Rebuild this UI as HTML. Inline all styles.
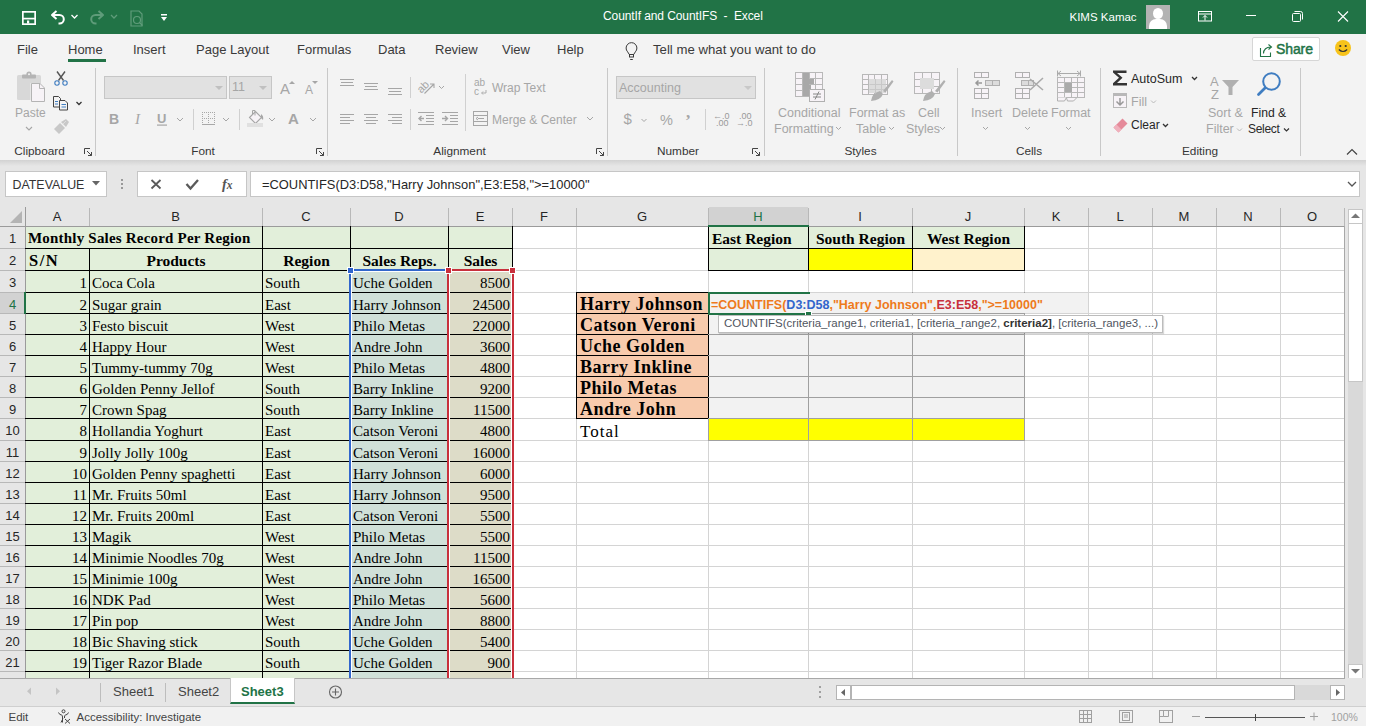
<!DOCTYPE html><html><head><meta charset="utf-8"><style>
*{margin:0;padding:0;box-sizing:border-box}
html,body{width:1380px;height:726px;overflow:hidden;background:#fff;position:relative;font-family:"Liberation Sans",sans-serif}
.abs{position:absolute}
.t{position:absolute;white-space:pre;line-height:1}
.sv{position:absolute;overflow:visible}
.cell{position:absolute;font-family:"Liberation Serif",serif;font-size:15px;color:#000;white-space:pre;line-height:21px;overflow:hidden}
.b{font-weight:bold}
</style></head><body>
<div class="abs" style="left:0;top:0;width:1366px;height:34px;background:#217346"></div>
<div class="abs" style="left:1366px;top:0;width:14px;height:726px;background:#fff"></div>
<div class="t" style="left:603px;top:10px;font-size:12px;color:#fff;letter-spacing:-0.1px">CountIf and CountIFS  -  Excel</div>
<div class="t" style="left:1069.5px;top:12px;font-size:11.5px;color:#fff">KIMS Kamac</div>
<div class="abs" style="left:1146px;top:5px;width:24px;height:24px;background:#b3b3b3;overflow:hidden"><div class="abs" style="left:7px;top:3px;width:10px;height:11px;border-radius:50%;background:#fff"></div><div class="abs" style="left:3px;top:14px;width:18px;height:12px;border-radius:7px 7px 0 0;background:#fff"></div></div>
<svg class="sv" style="left:0;top:0" width="1366" height="34"><g fill="none" stroke="#fff" stroke-width="1.7"><rect x="22.85" y="11.85" width="12.3" height="12.3"/><path d="M23 18.6h12"/></g><rect x="27" y="20.5" width="2.2" height="3" fill="#fff"/><g fill="none" stroke="#fff" stroke-width="2" stroke-linejoin="round"><path d="M56.5 11l-4.5 4l4.5 4"/><path d="M52.5 15h7a4.3 4.3 0 0 1 0 8.6h-1"/></g><path d="M71.5 15l3 3l3-3" fill="none" stroke="#fff" stroke-width="1.3"/><g fill="none" stroke="#5f9c7a" stroke-width="2" stroke-linejoin="round"><path d="M98.5 11l4.5 4l-4.5 4"/><path d="M102.5 15h-7a4.3 4.3 0 0 0 0 8.6h1"/></g><path d="M111 15l3 3l3-3" fill="none" stroke="#5f9c7a" stroke-width="1.3"/><g fill="none" stroke="#5f9c7a" stroke-width="1.2"><path d="M131 11h8l3 3v12h-11z"/><circle cx="137" cy="20" r="3.5"/><path d="M139.5 22.5l3 3"/></g><g fill="#fff"><rect x="161" y="14" width="6" height="1.5"/><path d="M161 17h6l-3 4z"/></g><g fill="none" stroke="#fff" stroke-width="1"><rect x="1198.5" y="11.5" width="13" height="9.5"/><path d="M1198.5 14h13"/><path d="M1205 20.5v-5M1203 17.5l2-2l2 2"/></g><path d="M1246 15.5h10" stroke="#fff" stroke-width="1"/><g fill="none" stroke="#fff" stroke-width="1"><rect x="1292.5" y="13.5" width="8" height="8" rx="1"/><path d="M1294.5 11.5h6a2 2 0 0 1 2 2v6"/></g><path d="M1338 11.5l10 10M1348 11.5l-10 10" stroke="#fff" stroke-width="1.1"/></svg>
<div class="abs" style="left:0;top:34px;width:1366px;height:126px;background:#f3f3f3"></div>
<div class="t" style="left:17px;top:43px;font-size:13px;color:#3a3a3a">File</div>
<div class="t" style="left:68px;top:43px;font-size:13px;color:#3a3a3a">Home</div>
<div class="t" style="left:133px;top:43px;font-size:13px;color:#3a3a3a">Insert</div>
<div class="t" style="left:196px;top:43px;font-size:13px;color:#3a3a3a">Page Layout</div>
<div class="t" style="left:297px;top:43px;font-size:13px;color:#3a3a3a">Formulas</div>
<div class="t" style="left:378px;top:43px;font-size:13px;color:#3a3a3a">Data</div>
<div class="t" style="left:435px;top:43px;font-size:13px;color:#3a3a3a">Review</div>
<div class="t" style="left:502px;top:43px;font-size:13px;color:#3a3a3a">View</div>
<div class="t" style="left:557px;top:43px;font-size:13px;color:#3a3a3a">Help</div>
<div class="abs" style="left:68px;top:59px;width:38px;height:3px;background:#217346"></div>
<svg class="sv" style="left:624px;top:41.5px" width="16" height="20"><g fill="none" stroke="#3a3a3a" stroke-width="1"><path d="M5.3 12.5L3.6 9.8A5.4 5.4 0 1 1 11.4 9.8L9.7 12.5z"/><rect x="5.5" y="12.5" width="4" height="2.5"/><path d="M6.2 17.5h2.6"/></g></svg>
<div class="t" style="left:653px;top:43px;font-size:13.2px;color:#3a3a3a">Tell me what you want to do</div>
<div class="abs" style="left:1252px;top:37px;width:68px;height:24px;background:#fff;border:1px solid #d6d6d6;border-radius:2px"></div>
<svg class="sv" style="left:1259px;top:42px" width="16" height="16"><g fill="none" stroke="#217346" stroke-width="1.1"><path d="M1.5 6v8.5h10v-4"/><path d="M4.5 11.5c0-4 3-6.5 7-6.5M9.5 2.5l3 2.5l-3 2.5"/></g></svg>
<div class="t" style="left:1276px;top:42px;font-size:14px;color:#217346;-webkit-text-stroke:0.45px #217346;letter-spacing:-0.1px">Share</div>
<svg class="sv" style="left:1334px;top:39px" width="18" height="18"><circle cx="9" cy="9" r="8" fill="#f7c31a"/><circle cx="6.3" cy="7" r="1.1" fill="#333"/><circle cx="11.7" cy="7" r="1.1" fill="#333"/><path d="M4.8 10.5q4.2 4 8.4 0" fill="none" stroke="#333" stroke-width="1.1"/></svg>
<div class="abs" style="left:95px;top:68px;width:1px;height:88px;background:#c8c8c8"></div>
<div class="abs" style="left:327px;top:68px;width:1px;height:88px;background:#c8c8c8"></div>
<div class="abs" style="left:607px;top:68px;width:1px;height:88px;background:#c8c8c8"></div>
<div class="abs" style="left:764px;top:68px;width:1px;height:88px;background:#c8c8c8"></div>
<div class="abs" style="left:957px;top:68px;width:1px;height:88px;background:#c8c8c8"></div>
<div class="abs" style="left:1100px;top:68px;width:1px;height:88px;background:#c8c8c8"></div>
<div class="abs" style="left:1300px;top:68px;width:1px;height:88px;background:#c8c8c8"></div>
<div class="t" style="left:-20.5px;width:120px;text-align:center;top:146px;font-size:11.8px;color:#363636">Clipboard</div>
<div class="t" style="left:143px;width:120px;text-align:center;top:146px;font-size:11.8px;color:#363636">Font</div>
<div class="t" style="left:399.5px;width:120px;text-align:center;top:146px;font-size:11.8px;color:#363636">Alignment</div>
<div class="t" style="left:618px;width:120px;text-align:center;top:146px;font-size:11.8px;color:#363636">Number</div>
<div class="t" style="left:800.5px;width:120px;text-align:center;top:146px;font-size:11.8px;color:#363636">Styles</div>
<div class="t" style="left:969px;width:120px;text-align:center;top:146px;font-size:11.8px;color:#363636">Cells</div>
<div class="t" style="left:1140px;width:120px;text-align:center;top:146px;font-size:11.8px;color:#363636">Editing</div>
<svg class="sv" style="left:84px;top:148px" width="9" height="9"><g fill="none" stroke="#444" stroke-width="1"><path d="M0.5 6V0.5H6"/><path d="M3 3l4.5 4.5M7.5 4v3.5h-3.5"/></g></svg>
<svg class="sv" style="left:316px;top:148px" width="9" height="9"><g fill="none" stroke="#444" stroke-width="1"><path d="M0.5 6V0.5H6"/><path d="M3 3l4.5 4.5M7.5 4v3.5h-3.5"/></g></svg>
<svg class="sv" style="left:596px;top:148px" width="9" height="9"><g fill="none" stroke="#444" stroke-width="1"><path d="M0.5 6V0.5H6"/><path d="M3 3l4.5 4.5M7.5 4v3.5h-3.5"/></g></svg>
<svg class="sv" style="left:752px;top:148px" width="9" height="9"><g fill="none" stroke="#444" stroke-width="1"><path d="M0.5 6V0.5H6"/><path d="M3 3l4.5 4.5M7.5 4v3.5h-3.5"/></g></svg>
<svg class="sv" style="left:1346px;top:148px" width="12" height="8"><path d="M1 6.5l5-5l5 5" fill="none" stroke="#444" stroke-width="1.2"/></svg>
<svg class="sv" style="left:0;top:0" width="95" height="160"><rect x="17" y="75" width="24" height="25" rx="1.5" fill="#d8d8d8"/><rect x="22" y="74.5" width="14" height="4" rx="1" fill="#b4b4b4"/><circle cx="29" cy="74" r="2.6" fill="#b4b4b4"/><circle cx="29" cy="74.3" r="1" fill="#f3f3f3"/><rect x="30.5" y="83" width="2" height="19" fill="#f3f3f3"/><path d="M31.5 83.5h8.5l4.5 4.5v13.5h-13z" fill="#f7f3f7" stroke="#b4b4b4" stroke-width="1"/><path d="M39.5 83.5v5h5" fill="none" stroke="#b4b4b4" stroke-width="1"/><g fill="none" stroke="#555" stroke-width="1.4"><path d="M57 71.5l6.5 9M65 71.5l-6.5 9"/></g><g fill="none" stroke="#3f7dc1" stroke-width="1.1"><circle cx="57" cy="83" r="2.2"/><circle cx="65" cy="83" r="2.2"/></g><g fill="none" stroke="#444" stroke-width="1"><path d="M53.5 96.5h5l2 2v8.5h-7z"/><path d="M59.5 100.5h5.5l2.5 2.5v7h-8z" fill="#f3f3f3"/></g><g stroke="#3f7dc1" stroke-width="1"><path d="M55 101.5h3M55 104h3M61.5 104.5h4.5M61.5 107h4.5"/></g><path d="M76.5 102l2.5 2.5l2.5-2.5" fill="none" stroke="#333" stroke-width="1.3"/><g fill="#c8c8c8"><path d="M54 129l6-6l5 5l-6 6z"/><path d="M61 122l5-3l3 3l-3 5z"/></g><path d="M63 124l3-3" stroke="#dedede" stroke-width="1"/></svg>
<div class="t" style="left:15px;top:107px;font-size:12px;color:#a6a6a6">Paste</div>
<svg class="sv" style="left:25px;top:126px" width="8" height="5"><path d="M1 1l3 3l3-3" fill="none" stroke="#a6a6a6" stroke-width="1.1"/></svg>
<div class="abs" style="left:104px;top:76px;width:123px;height:23px;background:#e1e1e1;border:1px solid #c6c6c6"></div>
<div class="abs" style="left:229px;top:76px;width:43px;height:23px;background:#e1e1e1;border:1px solid #c6c6c6"></div>
<div class="t" style="left:232px;top:81px;font-size:12.5px;color:#a6a6a6">11</div>
<svg class="sv" style="left:0;top:0" width="1366" height="160"><path d="M215 86l4 4l4-4z" fill="#c0c0c0"/><path d="M259 86l4 4l4-4z" fill="#c0c0c0"/><text x="280" y="94" font-family="Liberation Sans" font-size="15" fill="#a6a6a6">A</text><path d="M289 84l3-3l3 3z" fill="#a6a6a6"/><text x="305" y="94" font-family="Liberation Sans" font-size="12" fill="#a6a6a6">A</text><path d="M312 81l3 3l3-3z" fill="#a6a6a6"/><text x="109" y="124" font-family="Liberation Sans" font-size="14" font-weight="bold" fill="#a6a6a6">B</text><text x="135" y="124" font-family="Liberation Serif" font-size="15" font-style="italic" fill="#a6a6a6">I</text><text x="157" y="123" font-family="Liberation Sans" font-size="13" font-weight="bold" fill="#a6a6a6">U</text><rect x="157" y="124.5" width="10" height="1.2" fill="#a6a6a6"/><path d="M177 118l3 3l3-3" fill="none" stroke="#a6a6a6" stroke-width="1"/><rect x="193" y="109" width="1" height="21" fill="#d0d0d0"/><rect x="202" y="112" width="1" height="1" fill="#a8a8a8"/><rect x="202" y="118" width="1" height="1" fill="#a8a8a8"/><rect x="204" y="112" width="1" height="1" fill="#a8a8a8"/><rect x="204" y="118" width="1" height="1" fill="#a8a8a8"/><rect x="206" y="112" width="1" height="1" fill="#a8a8a8"/><rect x="206" y="118" width="1" height="1" fill="#a8a8a8"/><rect x="208" y="112" width="1" height="1" fill="#a8a8a8"/><rect x="208" y="118" width="1" height="1" fill="#a8a8a8"/><rect x="210" y="112" width="1" height="1" fill="#a8a8a8"/><rect x="210" y="118" width="1" height="1" fill="#a8a8a8"/><rect x="212" y="112" width="1" height="1" fill="#a8a8a8"/><rect x="212" y="118" width="1" height="1" fill="#a8a8a8"/><rect x="214" y="112" width="1" height="1" fill="#a8a8a8"/><rect x="214" y="118" width="1" height="1" fill="#a8a8a8"/><rect x="202" y="114" width="1" height="1" fill="#a8a8a8"/><rect x="202" y="116" width="1" height="1" fill="#a8a8a8"/><rect x="202" y="120" width="1" height="1" fill="#a8a8a8"/><rect x="202" y="122" width="1" height="1" fill="#a8a8a8"/><rect x="208" y="114" width="1" height="1" fill="#a8a8a8"/><rect x="208" y="116" width="1" height="1" fill="#a8a8a8"/><rect x="208" y="120" width="1" height="1" fill="#a8a8a8"/><rect x="208" y="122" width="1" height="1" fill="#a8a8a8"/><rect x="214" y="114" width="1" height="1" fill="#a8a8a8"/><rect x="214" y="116" width="1" height="1" fill="#a8a8a8"/><rect x="214" y="120" width="1" height="1" fill="#a8a8a8"/><rect x="214" y="122" width="1" height="1" fill="#a8a8a8"/><rect x="202" y="124" width="13" height="1" fill="#a8a8a8"/><path d="M223 118l3 3l3-3" fill="none" stroke="#a6a6a6" stroke-width="1"/><rect x="239" y="109" width="1" height="21" fill="#d0d0d0"/><path d="M249.5 117.5l6-6l6 6l-6 6z" fill="#f7f3f7" stroke="#a6a6a6" stroke-width="1.1"/><path d="M252.5 114v-3.5h2.5v5" fill="none" stroke="#a6a6a6" stroke-width="1"/><path d="M261 114q3 2 2 6l-2-2z" fill="#a6a6a6"/><rect x="247" y="123" width="16" height="4" fill="#e0e0e0"/><path d="M269 118l3 3l3-3" fill="none" stroke="#a6a6a6" stroke-width="1"/><text x="288" y="124" font-family="Liberation Sans" font-size="15" font-weight="bold" fill="#a6a6a6">A</text><path d="M310 118l3 3l3-3" fill="none" stroke="#a6a6a6" stroke-width="1"/></svg>
<svg class="sv" style="left:0;top:0" width="1366" height="160"><rect x="340" y="79" width="14" height="1" fill="#a6a6a6"/><rect x="341" y="82" width="12" height="1" fill="#a6a6a6"/><rect x="340" y="85" width="14" height="1" fill="#a6a6a6"/><rect x="364" y="83" width="14" height="1" fill="#a6a6a6"/><rect x="365" y="86" width="12" height="1" fill="#a6a6a6"/><rect x="364" y="89" width="14" height="1" fill="#a6a6a6"/><rect x="388" y="88" width="14" height="1" fill="#a6a6a6"/><rect x="389" y="91" width="12" height="1" fill="#a6a6a6"/><rect x="388" y="94" width="14" height="1" fill="#a6a6a6"/><rect x="410" y="77" width="1" height="21" fill="#d0d0d0"/><g fill="none" stroke="#a6a6a6" stroke-width="1.1"><path d="M424.5 93.5l9.5-9.5M430 84h4v4"/></g><text x="416" y="91" font-family="Liberation Sans" font-size="11" fill="#a6a6a6" transform="rotate(-45 422 86)">ab</text><path d="M439 86l2.5 2.5l2.5-2.5" fill="none" stroke="#a6a6a6" stroke-width="1"/><rect x="465" y="74" width="1" height="57" fill="#d0d0d0"/><rect x="340" y="114" width="14" height="1" fill="#a6a6a6"/><rect x="340" y="117" width="10" height="1" fill="#a6a6a6"/><rect x="340" y="120" width="14" height="1" fill="#a6a6a6"/><rect x="340" y="123" width="10" height="1" fill="#a6a6a6"/><rect x="364.0" y="114" width="14" height="1" fill="#a6a6a6"/><rect x="366.0" y="117" width="10" height="1" fill="#a6a6a6"/><rect x="364.0" y="120" width="14" height="1" fill="#a6a6a6"/><rect x="366.0" y="123" width="10" height="1" fill="#a6a6a6"/><rect x="388" y="114" width="14" height="1" fill="#a6a6a6"/><rect x="392" y="117" width="10" height="1" fill="#a6a6a6"/><rect x="388" y="120" width="14" height="1" fill="#a6a6a6"/><rect x="392" y="123" width="10" height="1" fill="#a6a6a6"/><rect x="410" y="109" width="1" height="21" fill="#d0d0d0"/><g fill="#a6a6a6"><rect x="418" y="112" width="16" height="1"/><rect x="426" y="115" width="8" height="1"/><rect x="426" y="118" width="8" height="1"/><rect x="426" y="121" width="8" height="1"/><rect x="418" y="124" width="16" height="1"/></g><path d="M419 118.5h5M421.5 116l-2.5 2.5l2.5 2.5" fill="none" stroke="#a6a6a6" stroke-width="1.4"/><g fill="#a6a6a6"><rect x="442" y="112" width="16" height="1"/><rect x="450" y="115" width="8" height="1"/><rect x="450" y="118" width="8" height="1"/><rect x="450" y="121" width="8" height="1"/><rect x="442" y="124" width="16" height="1"/></g><path d="M442 118.5h5M445 116l2.5 2.5l-2.5 2.5" fill="none" stroke="#a6a6a6" stroke-width="1.4"/><text x="474" y="86" font-family="Liberation Sans" font-size="10" fill="#a6a6a6">ab</text><text x="474" y="95" font-family="Liberation Sans" font-size="10" fill="#a6a6a6">c</text><path d="M486 90v3h-4M483 91.5l-1.5 1.5l1.5 1.5" fill="none" stroke="#a6a6a6" stroke-width="0.9"/><g fill="none" stroke="#a6a6a6" stroke-width="1"><rect x="473.5" y="111.5" width="14" height="14"/><path d="M473.5 115.5h14M473.5 121.5h14M478 118.5h6M476 118.5l2-1.5M476 118.5l2 1.5"/></g><path d="M587 117l3 3l3-3" fill="none" stroke="#a6a6a6" stroke-width="1"/></svg>
<div class="t" style="left:492px;top:82px;font-size:12px;color:#a6a6a6">Wrap Text</div>
<div class="t" style="left:492px;top:114px;font-size:12px;color:#a6a6a6">Merge &amp; Center</div>
<div class="abs" style="left:616px;top:76px;width:140px;height:23px;background:#e1e1e1;border:1px solid #c6c6c6"></div>
<div class="t" style="left:619px;top:82px;font-size:12.5px;color:#a6a6a6">Accounting</div>
<svg class="sv" style="left:0;top:0" width="1366" height="160"><path d="M744 86l4 4l4-4z" fill="#c8c8c8"/><text x="623.5" y="124" font-family="Liberation Sans" font-size="15" fill="#a6a6a6">$</text><path d="M641.5 119l2.5 2.5l2.5-2.5" fill="none" stroke="#a6a6a6" stroke-width="1"/><text x="660" y="125" font-family="Liberation Sans" font-size="14.5" fill="#a6a6a6">%</text><text x="686" y="118" font-family="Liberation Serif" font-size="17" font-weight="bold" fill="#a6a6a6">,</text><rect x="705" y="109" width="1" height="21" fill="#d0d0d0"/><text x="713" y="119" font-family="Liberation Sans" font-size="9" fill="#999">←.0</text><text x="716" y="126" font-family="Liberation Sans" font-size="9" fill="#999">.00</text><text x="739" y="119" font-family="Liberation Sans" font-size="9" fill="#999">.00</text><text x="736" y="126" font-family="Liberation Sans" font-size="9" fill="#999">→.0</text></svg>
<svg class="sv" style="left:0;top:0" width="1366" height="160"><g fill="none" stroke="#b8b8b8" stroke-width="1"><rect x="795.5" y="72.5" width="27" height="24" fill="#f7f3f7"/><path d="M802.5 72v25"/><path d="M809.5 72v25"/><path d="M815.5 72v25"/><path d="M795 78.5h28"/><path d="M795 84.5h28"/><path d="M795 90.5h28"/></g><rect x="803" y="73" width="6" height="23" fill="#a8a8a8"/><rect x="809" y="79" width="5" height="5" fill="#a8a8a8"/><rect x="809" y="85" width="2" height="5" fill="#a8a8a8"/><rect x="809.5" y="89.5" width="15" height="12" fill="#f7f3f7" stroke="#b0b0b0"/><path d="M813 94h8M813 97h8M819 91.5l-4 8" stroke="#888" stroke-width="1" fill="none"/><g fill="none" stroke="#b8b8b8" stroke-width="1"><rect x="862.5" y="74.5" width="25" height="20" fill="#f7f3f7"/><path d="M868.5 74v21"/><path d="M874.5 74v21"/><path d="M881.5 74v21"/><path d="M862 79.5h26"/><path d="M862 84.5h26"/><path d="M862 89.5h26"/></g><rect x="869" y="79" width="17" height="14" fill="#dcdcdc"/><path d="M869.5 84.5h17M869.5 89.5h17M875.5 79v14M881.5 79v14" stroke="#c8c8c8" stroke-width="1"/><path d="M883 91l9-11l1.5 1.5l-8 11z" fill="#b0b0b0"/><path d="M871 101q1-8 9-10l3 3q-2 6-12 7z" fill="#b0b0b0"/><g fill="none" stroke="#b8b8b8" stroke-width="1"><rect x="914.5" y="72.5" width="25" height="21" fill="#f7f3f7"/><path d="M922.5 72v22"/><path d="M931.5 72v22"/><path d="M914 79.5h26"/><path d="M914 86.5h26"/></g><rect x="920" y="78" width="14" height="11" fill="#dcdcdc"/><path d="M935 91l9-11l1.5 1.5l-8 11z" fill="#b0b0b0"/><path d="M923 101q1-8 9-10l3 3q-2 6-12 7z" fill="#b0b0b0"/></svg>
<div class="t" style="left:778px;top:107px;font-size:12.5px;color:#a6a6a6">Conditional</div>
<div class="t" style="left:774px;top:123px;font-size:12.5px;color:#a6a6a6">Formatting</div>
<div class="t" style="left:849px;top:107px;font-size:12.5px;color:#a6a6a6">Format as</div>
<div class="t" style="left:856px;top:123px;font-size:12.5px;color:#a6a6a6">Table</div>
<div class="t" style="left:918px;top:107px;font-size:12.5px;color:#a6a6a6">Cell</div>
<div class="t" style="left:906px;top:123px;font-size:12.5px;color:#a6a6a6">Styles</div>
<svg class="sv" style="left:0;top:0" width="1366" height="160"><path d="M836 127l2.5 2.5l2.5-2.5M889 127l2.5 2.5l2.5-2.5M940 127l2.5 2.5l2.5-2.5" fill="none" stroke="#a6a6a6" stroke-width="1"/></svg>
<svg class="sv" style="left:0;top:0" width="1366" height="160"><g fill="#f7f3f7" stroke="#b0b0b0" stroke-width="1"><rect x="974.5" y="72.5" width="7" height="5"/><rect x="981.5" y="72.5" width="7" height="5"/></g><g fill="#f7f3f7" stroke="#b0b0b0" stroke-width="1"><rect x="974.5" y="88.5" width="7" height="5"/><rect x="981.5" y="88.5" width="7" height="5"/><rect x="974.5" y="93.5" width="7" height="5"/><rect x="981.5" y="93.5" width="7" height="5"/></g><g fill="#dcdcdc" stroke="#b0b0b0" stroke-width="1"><rect x="985.5" y="80.5" width="7" height="5"/><rect x="992.5" y="80.5" width="7" height="5"/></g><path d="M976 83h6M978.5 80.5l-2.5 2.5l2.5 2.5" fill="none" stroke="#999" stroke-width="1.5"/><g fill="#f7f3f7" stroke="#b0b0b0" stroke-width="1"><rect x="1015.5" y="72.5" width="7" height="5"/><rect x="1022.5" y="72.5" width="7" height="5"/></g><g fill="#f7f3f7" stroke="#b0b0b0" stroke-width="1"><rect x="1015.5" y="88.5" width="7" height="5"/><rect x="1022.5" y="88.5" width="7" height="5"/><rect x="1015.5" y="93.5" width="7" height="5"/><rect x="1022.5" y="93.5" width="7" height="5"/></g><g fill="#dcdcdc" stroke="#b0b0b0" stroke-width="1"><rect x="1021.5" y="80.5" width="7" height="5"/><rect x="1028.5" y="80.5" width="5" height="5"/></g><path d="M1030 79l13 11M1043 78l-13 12" stroke="#aaa" stroke-width="1.6"/><g fill="none" stroke="#b8b8b8" stroke-width="1"><rect x="1057.5" y="77.5" width="27" height="20" fill="#f7f3f7"/><path d="M1064.5 77v21"/><path d="M1071.5 77v21"/><path d="M1077.5 77v21"/><path d="M1057 82.5h28"/><path d="M1057 87.5h28"/><path d="M1057 92.5h28"/></g><rect x="1065" y="83" width="7" height="9" fill="#aaa"/><path d="M1058 73.5h22M1058 73.5l3-2.5M1058 73.5l3 2.5M1080 73.5l-3-2.5M1080 73.5l-3 2.5M1057.5 70.5v6M1080.5 70.5v6" fill="none" stroke="#aaa" stroke-width="1"/><path d="M1057.5 97.5v3.5h7l2-3.5M1066.5 98l1 3h6l3-3" fill="#f7f3f7" stroke="#b0b0b0" stroke-width="1"/></svg>
<div class="t" style="left:971px;top:107px;font-size:12.5px;color:#a6a6a6">Insert</div>
<div class="t" style="left:1012px;top:107px;font-size:12.5px;color:#a6a6a6">Delete</div>
<div class="t" style="left:1051px;top:107px;font-size:12.5px;color:#a6a6a6">Format</div>
<svg class="sv" style="left:0;top:0" width="1366" height="160"><path d="M983 127l2.5 2.5l2.5-2.5M1025 127l2.5 2.5l2.5-2.5M1066 127l2.5 2.5l2.5-2.5" fill="none" stroke="#a6a6a6" stroke-width="1"/></svg>
<svg class="sv" style="left:0;top:0" width="1366" height="160"><path d="M1113 70.5h13.5v2.5h-9.5l5.5 4.8l-5.5 5.2h10v2.5h-14v-2.2l6-5.5l-6-5.3z" fill="#333"/><path d="M1192 77l2.5 2.5l2.5-2.5" fill="none" stroke="#333" stroke-width="1.3"/><g fill="#f7f3f7" stroke="#b8b8b8" stroke-width="1"><rect x="1113.5" y="93.5" width="13" height="14"/></g><rect x="1113" y="93" width="14" height="3" fill="#b8b8b8"/><path d="M1120 98v7M1116.5 101.5l3.5 3.5l3.5-3.5" fill="none" stroke="#999" stroke-width="1.5"/><path d="M1151 100.5l2.5 2.5l2.5-2.5" fill="none" stroke="#bbb" stroke-width="1"/><path d="M1116 130l-2.5-2.5l9-9l5 5l-9 9z" fill="#e58a9a"/><path d="M1113.5 127.5l3-3l5 5l-3 3z" fill="#f0b0bc"/><path d="M1163 124l2.5 2.5l2.5-2.5" fill="none" stroke="#333" stroke-width="1.3"/><text x="1210" y="86" font-family="Liberation Sans" font-size="13" fill="#a6a6a6">A</text><text x="1211" y="99" font-family="Liberation Sans" font-size="13" fill="#a6a6a6">Z</text><path d="M1222 80h17l-6.5 7v8h-4v-8z" fill="#b0b0b0"/><circle cx="1271.5" cy="81.5" r="8.3" fill="none" stroke="#3f7dc1" stroke-width="2"/><path d="M1265 88l-6.5 6.5" stroke="#3f7dc1" stroke-width="2.8" stroke-linecap="round"/><path d="M1237 128.5l2.5 2.5l2.5-2.5" fill="none" stroke="#bbb" stroke-width="1"/><path d="M1284 128.5l2.5 2.5l2.5-2.5" fill="none" stroke="#333" stroke-width="1.2"/></svg>
<div class="t" style="left:1131px;top:73px;font-size:12.5px;color:#262626">AutoSum</div>
<div class="t" style="left:1131px;top:96px;font-size:12.5px;color:#a6a6a6">Fill</div>
<div class="t" style="left:1131px;top:119px;font-size:12px;color:#262626">Clear</div>
<div class="t" style="left:1208px;top:107px;font-size:12.5px;color:#a6a6a6">Sort &amp;</div>
<div class="t" style="left:1206px;top:123px;font-size:12.5px;color:#a6a6a6">Filter</div>
<div class="t" style="left:1251px;top:107px;font-size:12.2px;color:#262626">Find &amp;</div>
<div class="t" style="left:1248px;top:123px;font-size:12px;letter-spacing:-0.3px;color:#2a2a2a">Select</div>
<div class="abs" style="left:0;top:160px;width:1366px;height:518px;background:#e6e6e6"></div>
<div class="abs" style="left:0;top:160px;width:1366px;height:6px;background:linear-gradient(#d2d2d2,#e6e6e6)"></div>
<div class="abs" style="left:5px;top:171px;width:102px;height:26px;background:#fff;border:1px solid #c6c6c6"></div>
<div class="t" style="left:12.5px;top:179px;font-size:12.4px;color:#333">DATEVALUE</div>
<svg class="sv" style="left:92px;top:181px" width="8" height="5"><path d="M0 0h8l-4 4.5z" fill="#666"/></svg>
<svg class="sv" style="left:120px;top:177px" width="4" height="14"><g fill="#999"><rect x="1" y="2" width="2" height="2"/><rect x="1" y="6" width="2" height="2"/><rect x="1" y="10" width="2" height="2"/></g></svg>
<div class="abs" style="left:137px;top:171px;width:110px;height:26px;background:#fff;border:1px solid #c6c6c6"></div>
<svg class="sv" style="left:0;top:160px" width="260" height="40"><path d="M151.5 20l9 8.5M160.5 20l-9 8.5" stroke="#5a5a5a" stroke-width="1.8"/><path d="M186.5 24l4 4.5l7.5-8.5" fill="none" stroke="#5a5a5a" stroke-width="2.3"/></svg>
<div class="t" style="left:222px;top:177px;font-family:'Liberation Serif',serif;font-style:italic;font-weight:bold;font-size:14.5px;color:#555">f<span style="font-size:11.5px">x</span></div>
<div class="abs" style="left:250px;top:171px;width:1110px;height:26px;background:#fff;border:1px solid #c6c6c6"></div>
<div class="t" style="left:262px;top:179px;font-size:12.9px;color:#262626">=COUNTIFS(D3:D58,"Harry Johnson",E3:E58,"&gt;=10000"</div>
<svg class="sv" style="left:1347px;top:181px" width="10" height="6"><path d="M1 1l4 4l4-4" fill="none" stroke="#555" stroke-width="1.3"/></svg>
<div class="abs" style="left:25px;top:226px;width:1320px;height:452px;background:#fff"></div>
<div class="abs" style="left:0;top:207px;width:1344px;height:19px;background:#e6e6e6"></div>
<svg class="sv" style="left:9px;top:210px" width="14" height="14"><path d="M13 1v12h-12z" fill="#b4b4b4"/></svg>
<div class="abs" style="left:709px;top:207px;width:99px;height:19px;background:#d2d2d2"></div>
<div class="abs" style="left:0;top:293px;width:25px;height:20px;background:#d2d2d2"></div>
<div class="t" style="left:25px;width:64px;text-align:center;top:210px;font-size:13px;color:#262626">A</div>
<div class="t" style="left:89px;width:173px;text-align:center;top:210px;font-size:13px;color:#262626">B</div>
<div class="t" style="left:262px;width:88px;text-align:center;top:210px;font-size:13px;color:#262626">C</div>
<div class="t" style="left:350px;width:98px;text-align:center;top:210px;font-size:13px;color:#262626">D</div>
<div class="t" style="left:448px;width:64px;text-align:center;top:210px;font-size:13px;color:#262626">E</div>
<div class="t" style="left:512px;width:64px;text-align:center;top:210px;font-size:13px;color:#262626">F</div>
<div class="t" style="left:576px;width:132px;text-align:center;top:210px;font-size:13px;color:#262626">G</div>
<div class="t" style="left:708px;width:100px;text-align:center;top:210px;font-size:13px;color:#217346">H</div>
<div class="t" style="left:808px;width:104px;text-align:center;top:210px;font-size:13px;color:#262626">I</div>
<div class="t" style="left:912px;width:112px;text-align:center;top:210px;font-size:13px;color:#262626">J</div>
<div class="t" style="left:1024px;width:64px;text-align:center;top:210px;font-size:13px;color:#262626">K</div>
<div class="t" style="left:1088px;width:64px;text-align:center;top:210px;font-size:13px;color:#262626">L</div>
<div class="t" style="left:1152px;width:64px;text-align:center;top:210px;font-size:13px;color:#262626">M</div>
<div class="t" style="left:1216px;width:64px;text-align:center;top:210px;font-size:13px;color:#262626">N</div>
<div class="t" style="left:1280px;width:64px;text-align:center;top:210px;font-size:13px;color:#262626">O</div>
<div class="t" style="left:0;width:25px;text-align:center;top:232px;font-size:13px;color:#262626">1</div>
<div class="t" style="left:0;width:25px;text-align:center;top:254px;font-size:13px;color:#262626">2</div>
<div class="t" style="left:0;width:25px;text-align:center;top:276px;font-size:13px;color:#262626">3</div>
<div class="t" style="left:0;width:25px;text-align:center;top:298px;font-size:13px;color:#217346">4</div>
<div class="t" style="left:0;width:25px;text-align:center;top:319px;font-size:13px;color:#262626">5</div>
<div class="t" style="left:0;width:25px;text-align:center;top:340px;font-size:13px;color:#262626">6</div>
<div class="t" style="left:0;width:25px;text-align:center;top:361px;font-size:13px;color:#262626">7</div>
<div class="t" style="left:0;width:25px;text-align:center;top:382px;font-size:13px;color:#262626">8</div>
<div class="t" style="left:0;width:25px;text-align:center;top:403px;font-size:13px;color:#262626">9</div>
<div class="t" style="left:0;width:25px;text-align:center;top:424px;font-size:13px;color:#262626">10</div>
<div class="t" style="left:0;width:25px;text-align:center;top:446px;font-size:13px;color:#262626">11</div>
<div class="t" style="left:0;width:25px;text-align:center;top:467px;font-size:13px;color:#262626">12</div>
<div class="t" style="left:0;width:25px;text-align:center;top:488px;font-size:13px;color:#262626">13</div>
<div class="t" style="left:0;width:25px;text-align:center;top:509px;font-size:13px;color:#262626">14</div>
<div class="t" style="left:0;width:25px;text-align:center;top:530px;font-size:13px;color:#262626">15</div>
<div class="t" style="left:0;width:25px;text-align:center;top:551px;font-size:13px;color:#262626">16</div>
<div class="t" style="left:0;width:25px;text-align:center;top:572px;font-size:13px;color:#262626">17</div>
<div class="t" style="left:0;width:25px;text-align:center;top:593px;font-size:13px;color:#262626">18</div>
<div class="t" style="left:0;width:25px;text-align:center;top:614px;font-size:13px;color:#262626">19</div>
<div class="t" style="left:0;width:25px;text-align:center;top:635px;font-size:13px;color:#262626">20</div>
<div class="t" style="left:0;width:25px;text-align:center;top:656px;font-size:13px;color:#262626">21</div>
<div class="t" style="left:0;width:25px;text-align:center;top:677px;font-size:13px;color:#262626">22</div>
<div class="abs" style="left:25px;top:226px;width:487px;height:44px;background:#e2efda"></div>
<div class="abs" style="left:25px;top:270px;width:325px;height:408px;background:#e2efda"></div>
<div class="abs" style="left:350px;top:270px;width:98px;height:408px;background:#d0e0d8"></div>
<div class="abs" style="left:448px;top:270px;width:64px;height:408px;background:#dddcc8"></div>
<div class="abs" style="left:708px;top:226px;width:316px;height:22px;background:#e2efda"></div>
<div class="abs" style="left:708px;top:248px;width:100px;height:22px;background:#e2efda"></div>
<div class="abs" style="left:808px;top:248px;width:104px;height:22px;background:#ffff00"></div>
<div class="abs" style="left:912px;top:248px;width:112px;height:22px;background:#fff2cc"></div>
<div class="abs" style="left:576px;top:292px;width:132px;height:126px;background:#f8cbad"></div>
<div class="abs" style="left:708px;top:292px;width:316px;height:126px;background:#f2f2f2"></div>
<div class="abs" style="left:708px;top:418px;width:316px;height:22px;background:#ffff00"></div>
<svg class="sv" style="left:0;top:0" width="1366" height="678">
<rect x="89" y="249" width="1" height="429" fill="#d4d4d4"/>
<rect x="262" y="227" width="1" height="451" fill="#d4d4d4"/>
<rect x="350" y="227" width="1" height="451" fill="#d4d4d4"/>
<rect x="448" y="227" width="1" height="451" fill="#d4d4d4"/>
<rect x="512" y="227" width="1" height="451" fill="#d4d4d4"/>
<rect x="576" y="227" width="1" height="451" fill="#d4d4d4"/>
<rect x="708" y="227" width="1" height="451" fill="#d4d4d4"/>
<rect x="808" y="227" width="1" height="451" fill="#d4d4d4"/>
<rect x="912" y="227" width="1" height="451" fill="#d4d4d4"/>
<rect x="1024" y="227" width="1" height="451" fill="#d4d4d4"/>
<rect x="1088" y="227" width="1" height="451" fill="#d4d4d4"/>
<rect x="1152" y="227" width="1" height="451" fill="#d4d4d4"/>
<rect x="1216" y="227" width="1" height="451" fill="#d4d4d4"/>
<rect x="1280" y="227" width="1" height="451" fill="#d4d4d4"/>
<rect x="1344" y="227" width="1" height="451" fill="#d4d4d4"/>
<rect x="25" y="248" width="1320" height="1" fill="#d4d4d4"/>
<rect x="25" y="270" width="1320" height="1" fill="#d4d4d4"/>
<rect x="25" y="292" width="1320" height="1" fill="#d4d4d4"/>
<rect x="25" y="313" width="1320" height="1" fill="#d4d4d4"/>
<rect x="25" y="334" width="1320" height="1" fill="#d4d4d4"/>
<rect x="25" y="355" width="1320" height="1" fill="#d4d4d4"/>
<rect x="25" y="376" width="1320" height="1" fill="#d4d4d4"/>
<rect x="25" y="397" width="1320" height="1" fill="#d4d4d4"/>
<rect x="25" y="418" width="1320" height="1" fill="#d4d4d4"/>
<rect x="25" y="440" width="1320" height="1" fill="#d4d4d4"/>
<rect x="25" y="461" width="1320" height="1" fill="#d4d4d4"/>
<rect x="25" y="482" width="1320" height="1" fill="#d4d4d4"/>
<rect x="25" y="503" width="1320" height="1" fill="#d4d4d4"/>
<rect x="25" y="524" width="1320" height="1" fill="#d4d4d4"/>
<rect x="25" y="545" width="1320" height="1" fill="#d4d4d4"/>
<rect x="25" y="566" width="1320" height="1" fill="#d4d4d4"/>
<rect x="25" y="587" width="1320" height="1" fill="#d4d4d4"/>
<rect x="25" y="608" width="1320" height="1" fill="#d4d4d4"/>
<rect x="25" y="629" width="1320" height="1" fill="#d4d4d4"/>
<rect x="25" y="650" width="1320" height="1" fill="#d4d4d4"/>
<rect x="25" y="671" width="1320" height="1" fill="#d4d4d4"/>
<rect x="25" y="208" width="1" height="18" fill="#b8b8b8"/>
<rect x="89" y="208" width="1" height="18" fill="#b8b8b8"/>
<rect x="262" y="208" width="1" height="18" fill="#b8b8b8"/>
<rect x="350" y="208" width="1" height="18" fill="#b8b8b8"/>
<rect x="448" y="208" width="1" height="18" fill="#b8b8b8"/>
<rect x="512" y="208" width="1" height="18" fill="#b8b8b8"/>
<rect x="576" y="208" width="1" height="18" fill="#b8b8b8"/>
<rect x="708" y="208" width="1" height="18" fill="#b8b8b8"/>
<rect x="808" y="208" width="1" height="18" fill="#b8b8b8"/>
<rect x="912" y="208" width="1" height="18" fill="#b8b8b8"/>
<rect x="1024" y="208" width="1" height="18" fill="#b8b8b8"/>
<rect x="1088" y="208" width="1" height="18" fill="#b8b8b8"/>
<rect x="1152" y="208" width="1" height="18" fill="#b8b8b8"/>
<rect x="1216" y="208" width="1" height="18" fill="#b8b8b8"/>
<rect x="1280" y="208" width="1" height="18" fill="#b8b8b8"/>
<rect x="1344" y="208" width="1" height="18" fill="#b8b8b8"/>
<rect x="0" y="248" width="25" height="1" fill="#b8b8b8"/>
<rect x="0" y="270" width="25" height="1" fill="#b8b8b8"/>
<rect x="0" y="292" width="25" height="1" fill="#b8b8b8"/>
<rect x="0" y="313" width="25" height="1" fill="#b8b8b8"/>
<rect x="0" y="334" width="25" height="1" fill="#b8b8b8"/>
<rect x="0" y="355" width="25" height="1" fill="#b8b8b8"/>
<rect x="0" y="376" width="25" height="1" fill="#b8b8b8"/>
<rect x="0" y="397" width="25" height="1" fill="#b8b8b8"/>
<rect x="0" y="418" width="25" height="1" fill="#b8b8b8"/>
<rect x="0" y="440" width="25" height="1" fill="#b8b8b8"/>
<rect x="0" y="461" width="25" height="1" fill="#b8b8b8"/>
<rect x="0" y="482" width="25" height="1" fill="#b8b8b8"/>
<rect x="0" y="503" width="25" height="1" fill="#b8b8b8"/>
<rect x="0" y="524" width="25" height="1" fill="#b8b8b8"/>
<rect x="0" y="545" width="25" height="1" fill="#b8b8b8"/>
<rect x="0" y="566" width="25" height="1" fill="#b8b8b8"/>
<rect x="0" y="587" width="25" height="1" fill="#b8b8b8"/>
<rect x="0" y="608" width="25" height="1" fill="#b8b8b8"/>
<rect x="0" y="629" width="25" height="1" fill="#b8b8b8"/>
<rect x="0" y="650" width="25" height="1" fill="#b8b8b8"/>
<rect x="0" y="671" width="25" height="1" fill="#b8b8b8"/>
<rect x="0" y="226" width="1345" height="1" fill="#9b9b9b"/>
<rect x="25" y="207" width="1" height="471" fill="#9b9b9b"/>
</svg>
<div class="abs" style="left:25px;top:248px;width:488px;height:1px;background:#000"></div>
<div class="abs" style="left:25px;top:270px;width:488px;height:1px;background:#000"></div>
<div class="abs" style="left:25px;top:292px;width:488px;height:1px;background:#000"></div>
<div class="abs" style="left:25px;top:313px;width:488px;height:1px;background:#000"></div>
<div class="abs" style="left:25px;top:334px;width:488px;height:1px;background:#000"></div>
<div class="abs" style="left:25px;top:355px;width:488px;height:1px;background:#000"></div>
<div class="abs" style="left:25px;top:376px;width:488px;height:1px;background:#000"></div>
<div class="abs" style="left:25px;top:397px;width:488px;height:1px;background:#000"></div>
<div class="abs" style="left:25px;top:418px;width:488px;height:1px;background:#000"></div>
<div class="abs" style="left:25px;top:440px;width:488px;height:1px;background:#000"></div>
<div class="abs" style="left:25px;top:461px;width:488px;height:1px;background:#000"></div>
<div class="abs" style="left:25px;top:482px;width:488px;height:1px;background:#000"></div>
<div class="abs" style="left:25px;top:503px;width:488px;height:1px;background:#000"></div>
<div class="abs" style="left:25px;top:524px;width:488px;height:1px;background:#000"></div>
<div class="abs" style="left:25px;top:545px;width:488px;height:1px;background:#000"></div>
<div class="abs" style="left:25px;top:566px;width:488px;height:1px;background:#000"></div>
<div class="abs" style="left:25px;top:587px;width:488px;height:1px;background:#000"></div>
<div class="abs" style="left:25px;top:608px;width:488px;height:1px;background:#000"></div>
<div class="abs" style="left:25px;top:629px;width:488px;height:1px;background:#000"></div>
<div class="abs" style="left:25px;top:650px;width:488px;height:1px;background:#000"></div>
<div class="abs" style="left:25px;top:671px;width:488px;height:1px;background:#000"></div>
<div class="abs" style="left:89px;top:248px;width:1px;height:431px;background:#000"></div>
<div class="abs" style="left:262px;top:248px;width:1px;height:431px;background:#000"></div>
<div class="abs" style="left:350px;top:248px;width:1px;height:431px;background:#000"></div>
<div class="abs" style="left:448px;top:248px;width:1px;height:431px;background:#000"></div>
<div class="abs" style="left:262px;top:226px;width:1px;height:23px;background:#000"></div>
<div class="abs" style="left:350px;top:226px;width:1px;height:23px;background:#000"></div>
<div class="abs" style="left:448px;top:226px;width:1px;height:23px;background:#000"></div>
<div class="abs" style="left:512px;top:226px;width:1px;height:453px;background:#000"></div>
<div class="abs" style="left:708px;top:248px;width:317px;height:1px;background:#000"></div>
<div class="abs" style="left:708px;top:270px;width:317px;height:1px;background:#000"></div>
<div class="abs" style="left:708px;top:226px;width:1px;height:45px;background:#000"></div>
<div class="abs" style="left:808px;top:226px;width:1px;height:45px;background:#000"></div>
<div class="abs" style="left:912px;top:226px;width:1px;height:45px;background:#000"></div>
<div class="abs" style="left:1024px;top:226px;width:1px;height:45px;background:#000"></div>
<div class="abs" style="left:576px;top:292px;width:133px;height:1px;background:#000"></div>
<div class="abs" style="left:576px;top:313px;width:133px;height:1px;background:#000"></div>
<div class="abs" style="left:576px;top:334px;width:133px;height:1px;background:#000"></div>
<div class="abs" style="left:576px;top:355px;width:133px;height:1px;background:#000"></div>
<div class="abs" style="left:576px;top:376px;width:133px;height:1px;background:#000"></div>
<div class="abs" style="left:576px;top:397px;width:133px;height:1px;background:#000"></div>
<div class="abs" style="left:576px;top:418px;width:133px;height:1px;background:#000"></div>
<div class="abs" style="left:576px;top:292px;width:1px;height:127px;background:#000"></div>
<div class="abs" style="left:708px;top:292px;width:1px;height:127px;background:#000"></div>
<div class="abs" style="left:708px;top:313px;width:317px;height:1px;background:#a0a0a0"></div>
<div class="abs" style="left:708px;top:334px;width:317px;height:1px;background:#a0a0a0"></div>
<div class="abs" style="left:708px;top:355px;width:317px;height:1px;background:#a0a0a0"></div>
<div class="abs" style="left:708px;top:376px;width:317px;height:1px;background:#a0a0a0"></div>
<div class="abs" style="left:708px;top:397px;width:317px;height:1px;background:#a0a0a0"></div>
<div class="abs" style="left:708px;top:418px;width:317px;height:1px;background:#a0a0a0"></div>
<div class="abs" style="left:708px;top:440px;width:317px;height:1px;background:#a0a0a0"></div>
<div class="abs" style="left:808px;top:292px;width:1px;height:149px;background:#a0a0a0"></div>
<div class="abs" style="left:912px;top:292px;width:1px;height:149px;background:#a0a0a0"></div>
<div class="abs" style="left:1024px;top:292px;width:1px;height:149px;background:#a0a0a0"></div>
<div class="abs" style="left:708px;top:418px;width:1px;height:23px;background:#a0a0a0"></div>
<div class="abs" style="left:708px;top:225px;width:101px;height:2px;background:#217346"></div>
<div class="abs" style="left:24px;top:292px;width:2px;height:22px;background:#217346"></div>
<div class="cell b" style="left:26px;top:228px;width:236px;height:21px;text-align:left;padding:0 2px 0 2px;line-height:23px;font-size:15px;margin-top:-1px;letter-spacing:0.2px">Monthly Sales Record Per Region</div>
<div class="cell b" style="left:26px;top:250px;width:63px;height:21px;text-align:left;padding:0 2px 0 2px;line-height:23px;font-size:16.5px;letter-spacing:1.5px;margin-top:-1px;padding-left:3px">S/N</div>
<div class="cell b" style="left:90px;top:250px;width:172px;height:21px;text-align:center;padding:0 2px 0 2px;line-height:23px;font-size:15.5px;margin-top:-1px">Products</div>
<div class="cell b" style="left:263px;top:250px;width:87px;height:21px;text-align:center;padding:0 2px 0 2px;line-height:23px;font-size:15.5px;margin-top:-1px">Region</div>
<div class="cell b" style="left:351px;top:250px;width:97px;height:21px;text-align:center;padding:0 2px 0 2px;line-height:23px;font-size:15.5px;margin-top:-1px">Sales Reps.</div>
<div class="cell b" style="left:449px;top:250px;width:63px;height:21px;text-align:center;padding:0 2px 0 2px;line-height:23px;font-size:15.5px;margin-top:-1px">Sales</div>
<div class="cell b" style="left:709px;top:228px;width:99px;height:21px;text-align:left;padding:0 2px 0 2px;line-height:23px;font-size:15.5px;padding-left:3px;margin-top:-1px">East Region</div>
<div class="cell b" style="left:809px;top:228px;width:103px;height:21px;text-align:center;padding:0 2px 0 2px;line-height:23px;font-size:15.5px;margin-top:-1px">South Region</div>
<div class="cell b" style="left:913px;top:228px;width:111px;height:21px;text-align:center;padding:0 2px 0 2px;line-height:23px;font-size:15.5px;margin-top:-1px">West Region</div>
<div class="cell " style="left:26px;top:272px;width:63px;height:21px;text-align:right;padding:0 2px 0 2px;line-height:23px;">1</div>
<div class="cell " style="left:90px;top:272px;width:172px;height:21px;text-align:left;padding:0 2px 0 2px;line-height:23px;">Coca Cola</div>
<div class="cell " style="left:263px;top:272px;width:87px;height:21px;text-align:left;padding:0 2px 0 2px;line-height:23px;">South</div>
<div class="cell " style="left:351px;top:272px;width:97px;height:21px;text-align:left;padding:0 2px 0 2px;line-height:23px;">Uche Golden</div>
<div class="cell " style="left:449px;top:272px;width:63px;height:21px;text-align:right;padding:0 2px 0 2px;line-height:23px;">8500</div>
<div class="cell " style="left:26px;top:294px;width:63px;height:20px;text-align:right;padding:0 2px 0 2px;line-height:22px;">2</div>
<div class="cell " style="left:90px;top:294px;width:172px;height:20px;text-align:left;padding:0 2px 0 2px;line-height:22px;">Sugar grain</div>
<div class="cell " style="left:263px;top:294px;width:87px;height:20px;text-align:left;padding:0 2px 0 2px;line-height:22px;">East</div>
<div class="cell " style="left:351px;top:294px;width:97px;height:20px;text-align:left;padding:0 2px 0 2px;line-height:22px;">Harry Johnson</div>
<div class="cell " style="left:449px;top:294px;width:63px;height:20px;text-align:right;padding:0 2px 0 2px;line-height:22px;">24500</div>
<div class="cell " style="left:26px;top:315px;width:63px;height:20px;text-align:right;padding:0 2px 0 2px;line-height:22px;">3</div>
<div class="cell " style="left:90px;top:315px;width:172px;height:20px;text-align:left;padding:0 2px 0 2px;line-height:22px;">Festo biscuit</div>
<div class="cell " style="left:263px;top:315px;width:87px;height:20px;text-align:left;padding:0 2px 0 2px;line-height:22px;">West</div>
<div class="cell " style="left:351px;top:315px;width:97px;height:20px;text-align:left;padding:0 2px 0 2px;line-height:22px;">Philo Metas</div>
<div class="cell " style="left:449px;top:315px;width:63px;height:20px;text-align:right;padding:0 2px 0 2px;line-height:22px;">22000</div>
<div class="cell " style="left:26px;top:336px;width:63px;height:20px;text-align:right;padding:0 2px 0 2px;line-height:22px;">4</div>
<div class="cell " style="left:90px;top:336px;width:172px;height:20px;text-align:left;padding:0 2px 0 2px;line-height:22px;">Happy Hour</div>
<div class="cell " style="left:263px;top:336px;width:87px;height:20px;text-align:left;padding:0 2px 0 2px;line-height:22px;">West</div>
<div class="cell " style="left:351px;top:336px;width:97px;height:20px;text-align:left;padding:0 2px 0 2px;line-height:22px;">Andre John</div>
<div class="cell " style="left:449px;top:336px;width:63px;height:20px;text-align:right;padding:0 2px 0 2px;line-height:22px;">3600</div>
<div class="cell " style="left:26px;top:357px;width:63px;height:20px;text-align:right;padding:0 2px 0 2px;line-height:22px;">5</div>
<div class="cell " style="left:90px;top:357px;width:172px;height:20px;text-align:left;padding:0 2px 0 2px;line-height:22px;">Tummy-tummy 70g</div>
<div class="cell " style="left:263px;top:357px;width:87px;height:20px;text-align:left;padding:0 2px 0 2px;line-height:22px;">West</div>
<div class="cell " style="left:351px;top:357px;width:97px;height:20px;text-align:left;padding:0 2px 0 2px;line-height:22px;">Philo Metas</div>
<div class="cell " style="left:449px;top:357px;width:63px;height:20px;text-align:right;padding:0 2px 0 2px;line-height:22px;">4800</div>
<div class="cell " style="left:26px;top:378px;width:63px;height:20px;text-align:right;padding:0 2px 0 2px;line-height:22px;">6</div>
<div class="cell " style="left:90px;top:378px;width:172px;height:20px;text-align:left;padding:0 2px 0 2px;line-height:22px;">Golden Penny Jellof</div>
<div class="cell " style="left:263px;top:378px;width:87px;height:20px;text-align:left;padding:0 2px 0 2px;line-height:22px;">South</div>
<div class="cell " style="left:351px;top:378px;width:97px;height:20px;text-align:left;padding:0 2px 0 2px;line-height:22px;">Barry Inkline</div>
<div class="cell " style="left:449px;top:378px;width:63px;height:20px;text-align:right;padding:0 2px 0 2px;line-height:22px;">9200</div>
<div class="cell " style="left:26px;top:399px;width:63px;height:20px;text-align:right;padding:0 2px 0 2px;line-height:22px;">7</div>
<div class="cell " style="left:90px;top:399px;width:172px;height:20px;text-align:left;padding:0 2px 0 2px;line-height:22px;">Crown Spag</div>
<div class="cell " style="left:263px;top:399px;width:87px;height:20px;text-align:left;padding:0 2px 0 2px;line-height:22px;">South</div>
<div class="cell " style="left:351px;top:399px;width:97px;height:20px;text-align:left;padding:0 2px 0 2px;line-height:22px;">Barry Inkline</div>
<div class="cell " style="left:449px;top:399px;width:63px;height:20px;text-align:right;padding:0 2px 0 2px;line-height:22px;">11500</div>
<div class="cell " style="left:26px;top:420px;width:63px;height:21px;text-align:right;padding:0 2px 0 2px;line-height:23px;">8</div>
<div class="cell " style="left:90px;top:420px;width:172px;height:21px;text-align:left;padding:0 2px 0 2px;line-height:23px;">Hollandia Yoghurt</div>
<div class="cell " style="left:263px;top:420px;width:87px;height:21px;text-align:left;padding:0 2px 0 2px;line-height:23px;">East</div>
<div class="cell " style="left:351px;top:420px;width:97px;height:21px;text-align:left;padding:0 2px 0 2px;line-height:23px;">Catson Veroni</div>
<div class="cell " style="left:449px;top:420px;width:63px;height:21px;text-align:right;padding:0 2px 0 2px;line-height:23px;">4800</div>
<div class="cell " style="left:26px;top:442px;width:63px;height:20px;text-align:right;padding:0 2px 0 2px;line-height:22px;">9</div>
<div class="cell " style="left:90px;top:442px;width:172px;height:20px;text-align:left;padding:0 2px 0 2px;line-height:22px;">Jolly Jolly 100g</div>
<div class="cell " style="left:263px;top:442px;width:87px;height:20px;text-align:left;padding:0 2px 0 2px;line-height:22px;">East</div>
<div class="cell " style="left:351px;top:442px;width:97px;height:20px;text-align:left;padding:0 2px 0 2px;line-height:22px;">Catson Veroni</div>
<div class="cell " style="left:449px;top:442px;width:63px;height:20px;text-align:right;padding:0 2px 0 2px;line-height:22px;">16000</div>
<div class="cell " style="left:26px;top:463px;width:63px;height:20px;text-align:right;padding:0 2px 0 2px;line-height:22px;">10</div>
<div class="cell " style="left:90px;top:463px;width:172px;height:20px;text-align:left;padding:0 2px 0 2px;line-height:22px;">Golden Penny spaghetti</div>
<div class="cell " style="left:263px;top:463px;width:87px;height:20px;text-align:left;padding:0 2px 0 2px;line-height:22px;">East</div>
<div class="cell " style="left:351px;top:463px;width:97px;height:20px;text-align:left;padding:0 2px 0 2px;line-height:22px;">Harry Johnson</div>
<div class="cell " style="left:449px;top:463px;width:63px;height:20px;text-align:right;padding:0 2px 0 2px;line-height:22px;">6000</div>
<div class="cell " style="left:26px;top:484px;width:63px;height:20px;text-align:right;padding:0 2px 0 2px;line-height:22px;">11</div>
<div class="cell " style="left:90px;top:484px;width:172px;height:20px;text-align:left;padding:0 2px 0 2px;line-height:22px;">Mr. Fruits 50ml</div>
<div class="cell " style="left:263px;top:484px;width:87px;height:20px;text-align:left;padding:0 2px 0 2px;line-height:22px;">East</div>
<div class="cell " style="left:351px;top:484px;width:97px;height:20px;text-align:left;padding:0 2px 0 2px;line-height:22px;">Harry Johnson</div>
<div class="cell " style="left:449px;top:484px;width:63px;height:20px;text-align:right;padding:0 2px 0 2px;line-height:22px;">9500</div>
<div class="cell " style="left:26px;top:505px;width:63px;height:20px;text-align:right;padding:0 2px 0 2px;line-height:22px;">12</div>
<div class="cell " style="left:90px;top:505px;width:172px;height:20px;text-align:left;padding:0 2px 0 2px;line-height:22px;">Mr. Fruits 200ml</div>
<div class="cell " style="left:263px;top:505px;width:87px;height:20px;text-align:left;padding:0 2px 0 2px;line-height:22px;">East</div>
<div class="cell " style="left:351px;top:505px;width:97px;height:20px;text-align:left;padding:0 2px 0 2px;line-height:22px;">Catson Veroni</div>
<div class="cell " style="left:449px;top:505px;width:63px;height:20px;text-align:right;padding:0 2px 0 2px;line-height:22px;">5500</div>
<div class="cell " style="left:26px;top:526px;width:63px;height:20px;text-align:right;padding:0 2px 0 2px;line-height:22px;">13</div>
<div class="cell " style="left:90px;top:526px;width:172px;height:20px;text-align:left;padding:0 2px 0 2px;line-height:22px;">Magik</div>
<div class="cell " style="left:263px;top:526px;width:87px;height:20px;text-align:left;padding:0 2px 0 2px;line-height:22px;">West</div>
<div class="cell " style="left:351px;top:526px;width:97px;height:20px;text-align:left;padding:0 2px 0 2px;line-height:22px;">Philo Metas</div>
<div class="cell " style="left:449px;top:526px;width:63px;height:20px;text-align:right;padding:0 2px 0 2px;line-height:22px;">5500</div>
<div class="cell " style="left:26px;top:547px;width:63px;height:20px;text-align:right;padding:0 2px 0 2px;line-height:22px;">14</div>
<div class="cell " style="left:90px;top:547px;width:172px;height:20px;text-align:left;padding:0 2px 0 2px;line-height:22px;">Minimie Noodles 70g</div>
<div class="cell " style="left:263px;top:547px;width:87px;height:20px;text-align:left;padding:0 2px 0 2px;line-height:22px;">West</div>
<div class="cell " style="left:351px;top:547px;width:97px;height:20px;text-align:left;padding:0 2px 0 2px;line-height:22px;">Andre John</div>
<div class="cell " style="left:449px;top:547px;width:63px;height:20px;text-align:right;padding:0 2px 0 2px;line-height:22px;">11500</div>
<div class="cell " style="left:26px;top:568px;width:63px;height:20px;text-align:right;padding:0 2px 0 2px;line-height:22px;">15</div>
<div class="cell " style="left:90px;top:568px;width:172px;height:20px;text-align:left;padding:0 2px 0 2px;line-height:22px;">Minimie 100g</div>
<div class="cell " style="left:263px;top:568px;width:87px;height:20px;text-align:left;padding:0 2px 0 2px;line-height:22px;">West</div>
<div class="cell " style="left:351px;top:568px;width:97px;height:20px;text-align:left;padding:0 2px 0 2px;line-height:22px;">Andre John</div>
<div class="cell " style="left:449px;top:568px;width:63px;height:20px;text-align:right;padding:0 2px 0 2px;line-height:22px;">16500</div>
<div class="cell " style="left:26px;top:589px;width:63px;height:20px;text-align:right;padding:0 2px 0 2px;line-height:22px;">16</div>
<div class="cell " style="left:90px;top:589px;width:172px;height:20px;text-align:left;padding:0 2px 0 2px;line-height:22px;">NDK Pad</div>
<div class="cell " style="left:263px;top:589px;width:87px;height:20px;text-align:left;padding:0 2px 0 2px;line-height:22px;">West</div>
<div class="cell " style="left:351px;top:589px;width:97px;height:20px;text-align:left;padding:0 2px 0 2px;line-height:22px;">Philo Metas</div>
<div class="cell " style="left:449px;top:589px;width:63px;height:20px;text-align:right;padding:0 2px 0 2px;line-height:22px;">5600</div>
<div class="cell " style="left:26px;top:610px;width:63px;height:20px;text-align:right;padding:0 2px 0 2px;line-height:22px;">17</div>
<div class="cell " style="left:90px;top:610px;width:172px;height:20px;text-align:left;padding:0 2px 0 2px;line-height:22px;">Pin pop</div>
<div class="cell " style="left:263px;top:610px;width:87px;height:20px;text-align:left;padding:0 2px 0 2px;line-height:22px;">West</div>
<div class="cell " style="left:351px;top:610px;width:97px;height:20px;text-align:left;padding:0 2px 0 2px;line-height:22px;">Andre John</div>
<div class="cell " style="left:449px;top:610px;width:63px;height:20px;text-align:right;padding:0 2px 0 2px;line-height:22px;">8800</div>
<div class="cell " style="left:26px;top:631px;width:63px;height:20px;text-align:right;padding:0 2px 0 2px;line-height:22px;">18</div>
<div class="cell " style="left:90px;top:631px;width:172px;height:20px;text-align:left;padding:0 2px 0 2px;line-height:22px;">Bic Shaving stick</div>
<div class="cell " style="left:263px;top:631px;width:87px;height:20px;text-align:left;padding:0 2px 0 2px;line-height:22px;">South</div>
<div class="cell " style="left:351px;top:631px;width:97px;height:20px;text-align:left;padding:0 2px 0 2px;line-height:22px;">Uche Golden</div>
<div class="cell " style="left:449px;top:631px;width:63px;height:20px;text-align:right;padding:0 2px 0 2px;line-height:22px;">5400</div>
<div class="cell " style="left:26px;top:652px;width:63px;height:20px;text-align:right;padding:0 2px 0 2px;line-height:22px;">19</div>
<div class="cell " style="left:90px;top:652px;width:172px;height:20px;text-align:left;padding:0 2px 0 2px;line-height:22px;">Tiger Razor Blade</div>
<div class="cell " style="left:263px;top:652px;width:87px;height:20px;text-align:left;padding:0 2px 0 2px;line-height:22px;">South</div>
<div class="cell " style="left:351px;top:652px;width:97px;height:20px;text-align:left;padding:0 2px 0 2px;line-height:22px;">Uche Golden</div>
<div class="cell " style="left:449px;top:652px;width:63px;height:20px;text-align:right;padding:0 2px 0 2px;line-height:22px;">900</div>
<div class="cell " style="left:26px;top:673px;width:63px;height:20px;text-align:right;padding:0 2px 0 2px;line-height:22px;">20</div>
<div class="cell " style="left:90px;top:673px;width:172px;height:20px;text-align:left;padding:0 2px 0 2px;line-height:22px;">Tummy tummy</div>
<div class="cell " style="left:263px;top:673px;width:87px;height:20px;text-align:left;padding:0 2px 0 2px;line-height:22px;">South</div>
<div class="cell " style="left:351px;top:673px;width:97px;height:20px;text-align:left;padding:0 2px 0 2px;line-height:22px;">Uche Golden</div>
<div class="cell " style="left:449px;top:673px;width:63px;height:20px;text-align:right;padding:0 2px 0 2px;line-height:22px;">7000</div>
<div class="cell b" style="left:577px;top:294px;width:131px;height:20px;text-align:left;padding:0 2px 0 2px;line-height:22px;font-size:18px;letter-spacing:0.5px;padding-left:3px;margin-top:-1px">Harry Johnson</div>
<div class="cell b" style="left:577px;top:315px;width:131px;height:20px;text-align:left;padding:0 2px 0 2px;line-height:22px;font-size:18px;letter-spacing:0.5px;padding-left:3px;margin-top:-1px">Catson Veroni</div>
<div class="cell b" style="left:577px;top:336px;width:131px;height:20px;text-align:left;padding:0 2px 0 2px;line-height:22px;font-size:18px;letter-spacing:0.5px;padding-left:3px;margin-top:-1px">Uche Golden</div>
<div class="cell b" style="left:577px;top:357px;width:131px;height:20px;text-align:left;padding:0 2px 0 2px;line-height:22px;font-size:18px;letter-spacing:0.5px;padding-left:3px;margin-top:-1px">Barry Inkline</div>
<div class="cell b" style="left:577px;top:378px;width:131px;height:20px;text-align:left;padding:0 2px 0 2px;line-height:22px;font-size:18px;letter-spacing:0.5px;padding-left:3px;margin-top:-1px">Philo Metas</div>
<div class="cell b" style="left:577px;top:399px;width:131px;height:20px;text-align:left;padding:0 2px 0 2px;line-height:22px;font-size:18px;letter-spacing:0.5px;padding-left:3px;margin-top:-1px">Andre John</div>
<div class="cell " style="left:577px;top:420px;width:131px;height:21px;text-align:left;padding:0 2px 0 2px;line-height:23px;font-size:17px;letter-spacing:1px;padding-left:3px">Total</div>
<div class="abs" style="left:351px;top:271px;width:97px;height:1px;background:#fff"></div>
<div class="abs" style="left:351px;top:271px;width:1px;height:408px;background:#fff"></div>
<div class="abs" style="left:447px;top:271px;width:1px;height:408px;background:#fff"></div>
<div class="abs" style="left:349px;top:269px;width:101px;height:2px;background:#3166cc"></div>
<div class="abs" style="left:349px;top:269px;width:2px;height:409px;background:#3166cc"></div>
<div class="abs" style="left:448px;top:269px;width:2px;height:409px;background:#3166cc"></div>
<div class="abs" style="left:449px;top:271px;width:63px;height:1px;background:#fff"></div>
<div class="abs" style="left:449px;top:271px;width:1px;height:408px;background:#fff"></div>
<div class="abs" style="left:511px;top:271px;width:1px;height:408px;background:#fff"></div>
<div class="abs" style="left:447px;top:269px;width:67px;height:2px;background:#c8303c"></div>
<div class="abs" style="left:447px;top:269px;width:2px;height:409px;background:#c8303c"></div>
<div class="abs" style="left:512px;top:269px;width:2px;height:409px;background:#c8303c"></div>
<div class="abs" style="left:348px;top:268px;width:5px;height:5px;background:#3166cc;outline:1px solid #fff"></div>
<div class="abs" style="left:446px;top:268px;width:5px;height:5px;background:#c8303c;outline:1px solid #fff"></div>
<div class="abs" style="left:510px;top:268px;width:5px;height:5px;background:#c8303c;outline:1px solid #fff"></div>
<div class="abs" style="left:709px;top:293px;width:379px;height:20px;background:#f2f2f2"></div>
<div class="abs" style="left:708px;top:292px;width:102px;height:2px;background:#217346"></div>
<div class="abs" style="left:708px;top:292px;width:2px;height:23px;background:#217346"></div>
<div class="abs" style="left:708px;top:313px;width:97px;height:2px;background:#217346"></div>
<div class="abs" style="left:806px;top:312px;width:5px;height:4px;background:#217346;outline:1px solid #fff"></div>
<div class="t" style="left:711px;top:299px;font-size:12.5px;font-weight:bold;color:#ee7a1c">=COUNTIFS(<span style="color:#3166cc">D3:D58</span>,"Harry Johnson",<span style="color:#c8303c">E3:E58</span>,"&gt;=10000"</div>
<div class="abs" style="left:718px;top:315px;width:445px;height:18px;background:#fff;border:1px solid #bcbcbc;box-shadow:1px 1px 1px rgba(0,0,0,.15)"></div>
<div class="t" style="left:724px;top:318px;font-size:11.5px;color:#505560">COUNTIFS(criteria_range1, criteria1, [criteria_range2, <b style="color:#333">criteria2]</b>, [criteria_range3, ...)</div>
<div class="abs" style="left:1345px;top:207px;width:21px;height:471px;background:#e6e6e6"></div>
<div class="abs" style="left:1348px;top:223px;width:15px;height:442px;background:#d9d9d9"></div>
<div class="abs" style="left:1348px;top:209px;width:15px;height:15px;background:#fff;border:1px solid #c6c6c6"></div>
<svg class="sv" style="left:1351px;top:213px" width="9" height="6"><path d="M0 5h9l-4.5-4.5z" fill="#777"/></svg>
<div class="abs" style="left:1348px;top:223px;width:15px;height:159px;background:#fff;border:1px solid #c6c6c6"></div>
<div class="abs" style="left:1348px;top:664px;width:15px;height:15px;background:#fff;border:1px solid #c6c6c6"></div>
<svg class="sv" style="left:1351px;top:669px" width="9" height="6"><path d="M0 0h9l-4.5 4.5z" fill="#777"/></svg>
<div class="abs" style="left:0;top:678px;width:1366px;height:28px;background:#e6e6e6"></div>
<div class="abs" style="left:0;top:678px;width:1345px;height:1px;background:#a8a8a8"></div>
<div class="abs" style="left:0;top:706px;width:1366px;height:1px;background:#cfcfcf"></div>
<div class="abs" style="left:1344px;top:226px;width:1px;height:453px;background:#a8a8a8"></div>
<svg class="sv" style="left:0;top:678px" width="1366" height="28"><path d="M27 13.3l4-3.8v7.6z" fill="#c4c4c4"/><path d="M56 9.5v7.6l4-3.8z" fill="#c4c4c4"/><rect x="100" y="5" width="1" height="19" fill="#bdbdbd"/><rect x="165" y="5" width="1" height="19" fill="#bdbdbd"/><circle cx="335.5" cy="14" r="6" fill="none" stroke="#666" stroke-width="1.1"/><path d="M332 14h7M335.5 10.5v7" stroke="#666" stroke-width="1.1"/><g fill="#a0a0a0"><rect x="819" y="8" width="2" height="2"/><rect x="819" y="13" width="2" height="2"/><rect x="819" y="18" width="2" height="2"/></g></svg>
<div class="abs" style="left:230px;top:678px;width:65px;height:26px;background:#fff;border:1px solid #c6c6c6;border-top:none;border-bottom:2px solid #217346"></div>
<div class="t" style="left:113px;top:685px;font-size:13px;color:#444">Sheet1</div>
<div class="t" style="left:178px;top:685px;font-size:13px;color:#444">Sheet2</div>
<div class="t" style="left:241px;top:685px;font-size:13px;color:#217346;font-weight:bold">Sheet3</div>
<div class="abs" style="left:836px;top:685px;width:15px;height:15px;background:#fff;border:1px solid #b4b4b4"></div>
<div class="abs" style="left:851px;top:685px;width:444px;height:15px;background:#fff;border:1px solid #b4b4b4"></div>
<div class="abs" style="left:1295px;top:685px;width:35px;height:15px;background:#d9d9d9"></div>
<div class="abs" style="left:1330px;top:685px;width:15px;height:15px;background:#fff;border:1px solid #b4b4b4"></div>
<svg class="sv" style="left:0;top:678px" width="1366" height="28"><path d="M841 14.5l4-3.5v7z" fill="#666"/><path d="M1336 11v7l4-3.5z" fill="#666"/></svg>
<div class="abs" style="left:0;top:707px;width:1366px;height:19px;background:#f1f1f1"></div>
<div class="t" style="left:8.5px;top:712px;font-size:11.5px;color:#444">Edit</div>
<svg class="sv" style="left:57px;top:709px" width="16" height="15"><g fill="none" stroke="#444" stroke-width="1"><circle cx="6.5" cy="2.3" r="1.5"/><path d="M1.5 3.5q1 2.5 3 2.5q1 0 1 2v5.5"/><path d="M11.5 3.5q-1 2.5-3 2.5q-1 0-1 2v1"/><path d="M6 9.5l-2 4"/><path d="M8 10l5 4.5M13 10l-5 4.5"/></g></svg>
<div class="t" style="left:76.5px;top:712px;font-size:11.5px;color:#444">Accessibility: Investigate</div>
<svg class="sv" style="left:0;top:704px" width="1366" height="22"><g fill="none" stroke="#a0a0a0" stroke-width="1"><rect x="1079.5" y="6.5" width="12" height="12"/><path d="M1083.5 6.5v12M1087.5 6.5v12M1079.5 10.5h12M1079.5 14.5h12"/></g><g fill="none" stroke="#a0a0a0" stroke-width="1"><rect x="1119.5" y="6.5" width="13" height="12"/><rect x="1122.5" y="8.5" width="7" height="8"/><path d="M1124 11h4M1124 13h4"/></g><g fill="none" stroke="#a0a0a0" stroke-width="1"><rect x="1159.5" y="6.5" width="13" height="12"/><path d="M1163.5 6.5v6h5v-6M1159.5 12.5h4"/></g><path d="M1192 12.5h8" stroke="#a0a0a0" stroke-width="1"/><rect x="1205" y="13" width="100" height="1" fill="#555"/><rect x="1255" y="10" width="1" height="7" fill="#444"/><path d="M1310 12.5h8M1314 8.5v8" stroke="#a0a0a0" stroke-width="1"/></svg>
<div class="t" style="left:1331px;top:712px;font-size:10.5px;color:#a0a0a0">100%</div>
</body></html>
